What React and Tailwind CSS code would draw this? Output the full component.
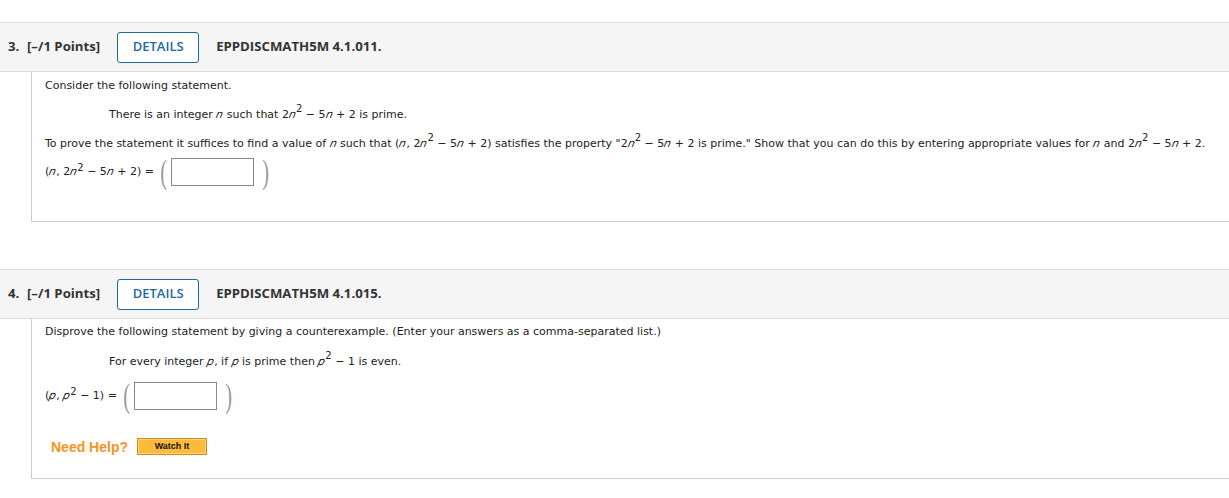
import React from "react";

const body = { fontFamily: '"DejaVu Sans", Verdana, sans-serif' };

// DejaVu italic may be synthesized faintly, so lean the variable a bit
function N({ children }) {
  return <i className="inline-block -skew-x-12">{children}</i>;
}

function Sup({ children }) {
  return <sup className="text-[10px] -top-[6px]">{children}</sup>;
}

function Header({ num, code }) {
  return (
    <div
      className="flex h-[50px] items-center border-y border-[#dcdcdc] bg-[#f5f5f5] text-[13.2px] font-bold text-[#333]"
      style={{ fontFamily: '"Open Sans", "Noto Sans", sans-serif' }}
    >
      <span className="ml-[8px] w-[19px]">{num}.</span>
      <span>[–/1 Points]</span>
      <button className="ml-[17px] h-[31px] w-[82px] rounded-[3px] border border-[#1f6aa0] bg-white text-[13px] font-semibold text-[#1f6aa0]">
        DETAILS
      </button>
      <span className="ml-[17px]">{code}</span>
    </div>
  );
}

function Answer({ label }) {
  return (
    <div className="flex h-[36px] items-center">
      <span>{label} =</span>
      <span className="ml-[4px] text-[34px] font-thin leading-none text-[#999] scale-x-[0.6]" style={{ fontFamily: '"Liberation Serif", serif' }}>(</span>
      <input className="ml-[2px] h-[28px] w-[83px] border border-[#888] bg-white" />
      <span className="ml-[6px] text-[34px] font-thin leading-none text-[#999] scale-x-[0.6]" style={{ fontFamily: '"Liberation Serif", serif' }}>)</span>
    </div>
  );
}

export default function App() {
  return (
    <div className="min-h-[498px] bg-white pt-[22px] text-[#222]">
      <Header num="3" code="EPPDISCMATH5M 4.1.011." />
      <div className="ml-[31px] h-[150px] border-b border-l border-[#cccccc] pl-[13px] pt-[6px] text-[11px] leading-[16px]" style={body}>
        <p>Consider the following statement.</p>
        <p className="ml-[64px] mt-[13px]">
          There is an integer <N>n</N> such that 2<N>n</N>
          <Sup>2</Sup> − 5<N>n</N> + 2 is prime.
        </p>
        <p className="mt-[13px]">
          To prove the statement it suffices to find a value of <N>n</N> such that (<N>n</N>, 2<N>n</N>
          <Sup>2</Sup> − 5<N>n</N> + 2) satisfies the property "2<N>n</N>
          <Sup>2</Sup> − 5<N>n</N> + 2 is prime." Show that you can do this by entering appropriate values for <N>n</N> and 2<N>n</N>
          <Sup>2</Sup> − 5<N>n</N> + 2.
        </p>
        <div className="mt-[2px]">
          <Answer
            label={
              <>
                (<N>n</N>, 2<N>n</N>
                <sup className="text-[10px] -top-[4px]">2</sup> − 5<N>n</N> + 2)
              </>
            }
          />
        </div>
      </div>

      <div className="h-[47px]" />

      <Header num="4" code="EPPDISCMATH5M 4.1.015." />
      <div className="ml-[31px] h-[160px] border-b border-l border-[#cccccc] pl-[13px] pt-[5px] text-[11px] leading-[16px]" style={body}>
        <p>Disprove the following statement by giving a counterexample. (Enter your answers as a comma-separated list.)</p>
        <p className="ml-[64px] mt-[14px]">
          For every integer <N>p</N>, if <N>p</N> is prime then <N>p</N>
          <Sup>2</Sup> − 1 is even.
        </p>
        <div className="mt-[8px]">
          <Answer
            label={
              <>
                (<N>p</N>, <N>p</N>
                <sup className="text-[10px] -top-[4px]">2</sup> − 1)
              </>
            }
          />
        </div>
        <div className="ml-[6px] mt-[24px] flex items-center">
          <span className="text-[14px] font-bold text-[#f7941d]" style={{ fontFamily: '"Liberation Sans", Arial, sans-serif' }}>
            Need Help?
          </span>
          <button
            className="ml-[9px] h-[17px] w-[70px] border border-[#d9861f] bg-[#fdbb3c] text-[9px] font-bold leading-none text-[#111] shadow-[inset_0_0_0_1px_#fcd27a]"
            style={{ fontFamily: '"Liberation Sans", Arial, sans-serif' }}
          >
            Watch It
          </button>
        </div>
      </div>
    </div>
  );
}
